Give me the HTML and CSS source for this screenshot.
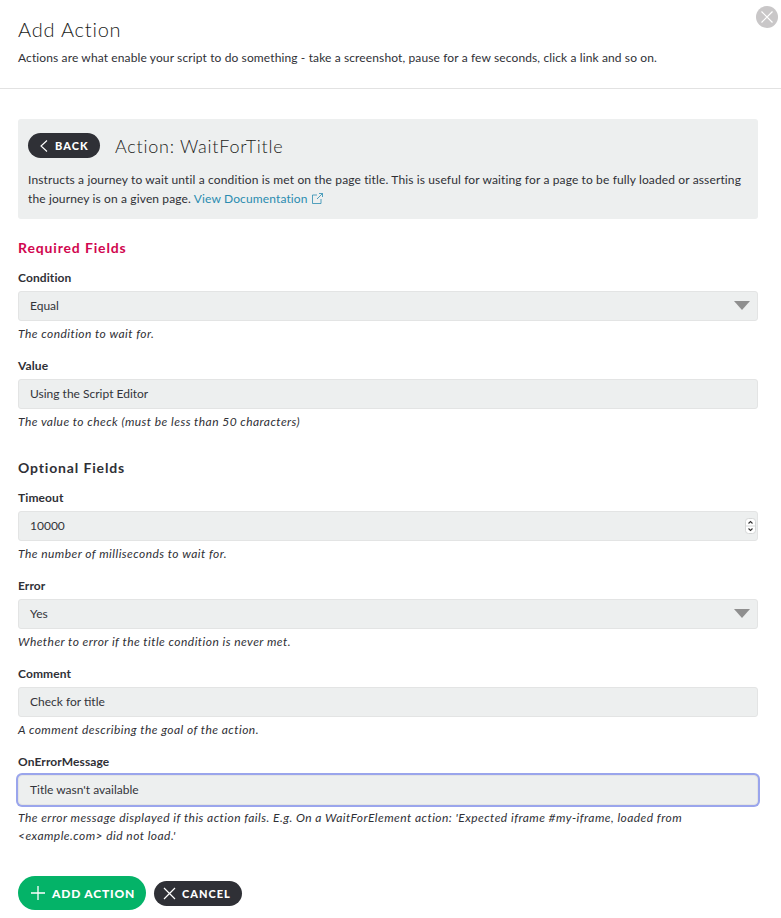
FILE: index.html
```html
<!DOCTYPE html>
<html lang="en">
<head>
    <meta charset="UTF-8">
    <meta name="viewport" content="width=device-width, initial-scale=1.0">
    <title>Add Action</title>
    <link rel="stylesheet" href="styles.css">
</head>
<body>
    <div class="modal">
        <button class="close-btn" aria-label="Close">
            <svg width="14" height="14" viewBox="0 0 14 14"><path d="M1.5 1.5l11 11M12.5 1.5l-11 11" stroke="#fff" stroke-width="1.2" fill="none"/></svg>
        </button>

        <header class="modal-header">
            <h1>Add Action</h1>
            <p>Actions are what enable your script to do something - take a screenshot, pause for a few seconds, click a link and so on.</p>
        </header>

        <div class="modal-body">
            <section class="action-info">
                <div class="action-title">
                    <button class="btn btn-dark btn-back">
                        <svg width="10" height="14" viewBox="0 0 10 14"><path d="M8 1.5L2 7l6 5.5" stroke="#fff" stroke-width="1.1" fill="none"/></svg>
                        BACK
                    </button>
                    <h2>Action: WaitForTitle</h2>
                </div>
                <p>Instructs a journey to wait until a condition is met on the page title. This is useful for waiting for a page to be fully loaded or asserting the journey is on a given page. <a href="#">View Documentation<svg class="ext-icon" width="11" height="11" viewBox="0 0 11 11"><path d="M5 2H.5v8.5H9V6M5 6l5.5-5.5M7 .5h3.5V4" stroke="#2a8cb0" stroke-width=".8" fill="none"/></svg></a></p>
            </section>

            <h3 class="section-title required">Required Fields</h3>

            <div class="field">
                <label>Condition</label>
                <div class="control select-control"><div class="input">Equal</div></div>
                <p class="hint">The condition to wait for.</p>
            </div>
            <div class="field">
                <label>Value</label>
                <div class="control"><div class="input">Using the Script Editor</div></div>
                <p class="hint">The value to check (must be less than 50 characters)</p>
            </div>

            <h3 class="section-title optional">Optional Fields</h3>

            <div class="field">
                <label>Timeout</label>
                <div class="control">
                    <div class="input">10000</div>
                    <svg class="spinner" width="11" height="16" viewBox="0 0 11 16">
                        <rect x=".5" y=".5" width="10" height="15" rx="3" fill="#fff" stroke="#d5d7d7"/>
                        <path d="M.5 8h10" stroke="#d5d7d7"/>
                        <path d="M3.5 5.5l2-2 2 2M3.5 10.5l2 2 2-2" stroke="#333" stroke-width="1.1" fill="none"/>
                    </svg>
                </div>
                <p class="hint">The number of milliseconds to wait for.</p>
            </div>
            <div class="field">
                <label>Error</label>
                <div class="control select-control"><div class="input">Yes</div></div>
                <p class="hint">Whether to error if the title condition is never met.</p>
            </div>
            <div class="field">
                <label>Comment</label>
                <div class="control"><div class="input">Check for title</div></div>
                <p class="hint">A comment describing the goal of the action.</p>
            </div>
            <div class="field">
                <label>OnErrorMessage</label>
                <div class="control"><div class="input focused">Title wasn't available</div></div>
                <p class="hint">The error message displayed if this action fails. E.g. On a WaitForElement action: 'Expected iframe #my-iframe, loaded from &lt;example.com&gt; did not load.'</p>
            </div>

            <div class="actions">
                <button class="btn btn-green">
                    <svg width="16" height="16" viewBox="0 0 16 16"><path d="M8 1v14M1 8h14" stroke="#fff" stroke-width="1.3" fill="none"/></svg>
                    ADD ACTION
                </button>
                <button class="btn btn-dark btn-cancel">
                    <svg width="13" height="13" viewBox="0 0 13 13"><path d="M1 1l11 11M12 1L1 12" stroke="#fff" stroke-width="1.2" fill="none"/></svg>
                    CANCEL
                </button>
            </div>
        </div>
    </div>
</body>
</html>
```
FILE: styles.css
```css
* {
    box-sizing: border-box;
}

body {
    margin: 0;
    background-color: #fff;
    font-family: 'Lato', 'Open Sans', sans-serif;
    color: #2f3036;
    font-size: 12px;
}

.modal {
    position: relative;
    min-height: 918px;
}

.close-btn {
    position: absolute;
    top: 6px;
    right: 3px;
    width: 22px;
    height: 22px;
    padding: 0;
    border: none;
    border-radius: 50%;
    background-color: #c9c7c8;
    display: flex;
    align-items: center;
    justify-content: center;
}

.modal-header {
    height: 89px;
    padding: 16px 18px 0;
    border-bottom: 1px solid #e2e2e2;
}

.modal-header h1 {
    margin: 0;
    font-size: 20px;
    line-height: 26px;
    font-weight: 300;
    letter-spacing: 0.8px;
    color: #1b1c20;
}

.modal-header p {
    margin: 7px 0 0;
    line-height: 18px;
    letter-spacing: 0.12px;
}

.modal-body {
    padding: 30px 23px 0 18px;
}

.action-info {
    height: 100px;
    padding: 14px 10px 0;
    background-color: #edefef;
    border-radius: 3px;
}

.action-info p {
    margin: 12px 0 0;
    line-height: 19px;
    letter-spacing: 0.13px;
}

.action-info a {
    color: #2a8cb0;
    text-decoration: none;
}

.ext-icon {
    margin-left: 4px;
    vertical-align: -1px;
}

.action-title {
    display: flex;
    align-items: center;
    gap: 15px;
}

.action-title h2 {
    margin: 0;
    font-size: 18px;
    font-weight: 300;
    letter-spacing: 0.75px;
    color: #1b1c20;
}

.btn {
    display: inline-flex;
    align-items: center;
    border: none;
    color: #fff;
    font-family: inherit;
    font-weight: 900;
    letter-spacing: 1px;
}

.btn-dark {
    background-color: #2f3036;
}

.btn-back {
    width: 72px;
    height: 25px;
    padding: 0 0 0 11px;
    gap: 6px;
    border-radius: 12.5px;
    font-size: 11px;
}

.section-title {
    margin: 0 0 13px;
    font-size: 14px;
    line-height: 18px;
    font-weight: 700;
    letter-spacing: 0.85px;
}

.required {
    margin-top: 20px;
    color: #d1064f;
}

.optional {
    margin-top: 28px;
}

.field {
    margin-bottom: 15px;
}

.field label {
    display: block;
    font-weight: 700;
    line-height: 15px;
    letter-spacing: 0.1px;
}

.control {
    position: relative;
    margin-top: 6px;
}

.input {
    height: 30px;
    padding: 0 11px;
    background-color: #edefef;
    border: 1px solid #e3e4e4;
    border-radius: 3px;
    line-height: 27px;
    color: #33343a;
}

.input.focused {
    box-shadow: 0 0 0 2px #9aa5ec;
    border-radius: 4px;
}

.select-control::after {
    content: "";
    position: absolute;
    top: 10px;
    right: 8px;
    border-left: 8px solid transparent;
    border-right: 8px solid transparent;
    border-top: 9px solid #8f8f8f;
}

.spinner {
    position: absolute;
    top: 7px;
    right: 2px;
}

.hint {
    margin: 4px 0 0;
    font-style: italic;
    line-height: 18px;
    letter-spacing: 0.45px;
}

.actions {
    display: flex;
    align-items: center;
    gap: 8px;
    margin-top: 31px;
}

.btn-green {
    height: 34px;
    width: 128px;
    padding-left: 12px;
    gap: 6px;
    border-radius: 17px;
    background-color: #04b368;
    font-size: 12px;
    letter-spacing: 0.8px;
}

.btn-cancel {
    height: 25px;
    width: 88px;
    padding-left: 9px;
    gap: 6px;
    border-radius: 12.5px;
    font-size: 11px;
}
```
